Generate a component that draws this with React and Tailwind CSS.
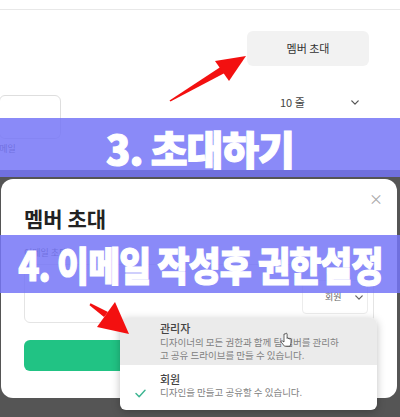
import React from "react";

function Chevron({ className }) {
  return (
    <svg viewBox="0 0 10 6" className={className} fill="none" stroke="currentColor" strokeWidth="1.6" strokeLinecap="round" strokeLinejoin="round">
      <path d="M1 1l4 4 4-4" />
    </svg>
  );
}

export default function App() {
  return (
    <div className="relative w-[400px] h-[417px] overflow-hidden bg-[#555555] font-['Noto_Sans_CJK_KR','Noto_Sans',sans-serif]">
      {/* page behind */}
      <div className="h-[170px] bg-white flex flex-col">
        <div className="h-[10px] border-b border-[#e8e8e8] shrink-0" />
        <div className="flex justify-end pr-[31px] pt-[21px]">
          <div className="w-[122px] h-[35px] rounded-md bg-[#f2f2f2] flex items-center justify-center text-[11px] text-[#333]">
            멤버 초대
          </div>
        </div>
        <div className="flex items-center mt-[19px] h-[34px]">
          <div className="w-[62px] h-[44px] -ml-px mt-[10px] self-start border border-[#dedede] rounded-md bg-white" />
          <div className="ml-[219px] text-[11px] text-[#444]">10 줄</div>
          <Chevron className="w-[8px] h-[5px] ml-[46px] text-[#555]" />
        </div>
        <div className="mt-[23px] -ml-[9px] text-[9px] leading-[14px] text-[#555]">이메일</div>
      </div>

      {/* overlay with modal */}
      <div className="h-[247px] pt-[9px] pl-[1px] pr-[3px]">
        <div className="relative h-[219px] bg-white rounded-xl px-[23px] flex flex-col">
          <div className="absolute top-[12px] right-[14px] text-[#a8a8a8] text-[14px] leading-[14px]">×</div>
          <div className="mt-[26px] text-[21px] leading-[26px] font-bold text-[#222]">멤버 초대</div>
          <div className="mt-[15px] text-[9px] leading-[14px] text-[#555]">이메일 초대</div>
          <div className="mt-[4px] h-[59px] border border-[#e4e4e4] rounded-md flex justify-end items-start pt-[15px] pr-[5px]">
            <div className="w-[66px] h-[34px] border border-[#ececec] rounded-sm flex items-center pl-[22px] gap-[13px]">
              <span className="text-[9px] text-[#666]">회원</span>
              <Chevron className="w-[8px] h-[5px] text-[#666]" />
            </div>
          </div>
          <div className="mt-[17px] h-[31px] rounded-md bg-[#21c384]" />
        </div>
      </div>

      {/* banner 1 */}
      <div className="absolute left-0 top-[118px] w-[400px] h-[59px] bg-[rgba(118,118,247,0.85)] flex items-center justify-center">
        <span className="text-white text-[40px] font-black leading-none whitespace-nowrap tracking-[-1px] [-webkit-text-stroke:1.2px_white]">3. 초대하기</span>
      </div>

      {/* banner 2 */}
      <div className="absolute left-0 top-[235px] w-[400px] h-[58px] bg-[rgba(118,118,247,0.85)] flex items-center justify-center">
        <span className="text-white text-[40px] font-black leading-none scale-x-[0.87] whitespace-nowrap tracking-[-1px] [-webkit-text-stroke:1.2px_white]">4. 이메일 작성후 권한설정</span>
      </div>

      {/* dropdown */}
      <div className="absolute left-[120px] top-[318px] w-[257px] h-[92px] bg-white rounded-md shadow-[0_2px_8px_rgba(0,0,0,0.25)] overflow-hidden flex flex-col">
        <div className="h-[47px] bg-[#ebebeb] pl-[40px] pt-[3px]">
          <div className="text-[11px] leading-[14px] text-[#444] font-medium">관리자</div>
          <div className="mt-[1px] text-[9.5px] leading-[13px] text-[#808080]">
            디자이너의 모든 권한과 함께 팀 멤버를 관리하
            <br />
            고 공유 드라이브를 만들 수 있습니다.
          </div>
        </div>
        <div className="flex-1 flex pt-[7px]">
          <div className="w-[40px] flex justify-center pt-[17px]">
            <svg viewBox="0 0 12 10" className="w-[11px] h-[9px]" fill="none" stroke="#3db592" strokeWidth="1.6" strokeLinecap="round" strokeLinejoin="round">
              <path d="M1 5l3.5 3.5L11 1.5" />
            </svg>
          </div>
          <div>
            <div className="text-[11px] leading-[14px] text-[#444] font-medium">회원</div>
            <div className="text-[9.5px] leading-[13px] text-[#808080]">디자인을 만들고 공유할 수 있습니다.</div>
          </div>
        </div>
      </div>

      {/* cursor + arrows */}
      <svg className="absolute inset-0 w-[400px] h-[417px] pointer-events-none" viewBox="0 0 400 417">
        <path d="M284 334 v8 l-1.5 -1 c-1 -0.6 -2 0.4 -1.2 1.2 l3.2 4 h5.5 c0.8 -1.5 1 -3 1 -4.5 v-2.5 c0 -0.9 -1.3 -0.9 -1.3 0 v-0.4 c0 -0.9 -1.3 -0.9 -1.3 0 v-0.4 c0 -0.9 -1.3 -0.9 -1.3 0 v-4.4 c0 -1 -1.6 -1 -1.6 0 z" fill="#fff" stroke="#222" strokeWidth="0.7" />
        <polygon points="169.5,100.4 170.5,101.6 225.6,72.6 221.6,66.2" fill="#f31010" />
        <polygon points="246,56 215,61 229,81" fill="#f31010" />
        <polygon points="89.5,305.2 90.5,303.2 108,312 104,317" fill="#f31010" />
        <polygon points="129,334 97,327 115,302" fill="#f31010" />
      </svg>
    </div>
  );
}
